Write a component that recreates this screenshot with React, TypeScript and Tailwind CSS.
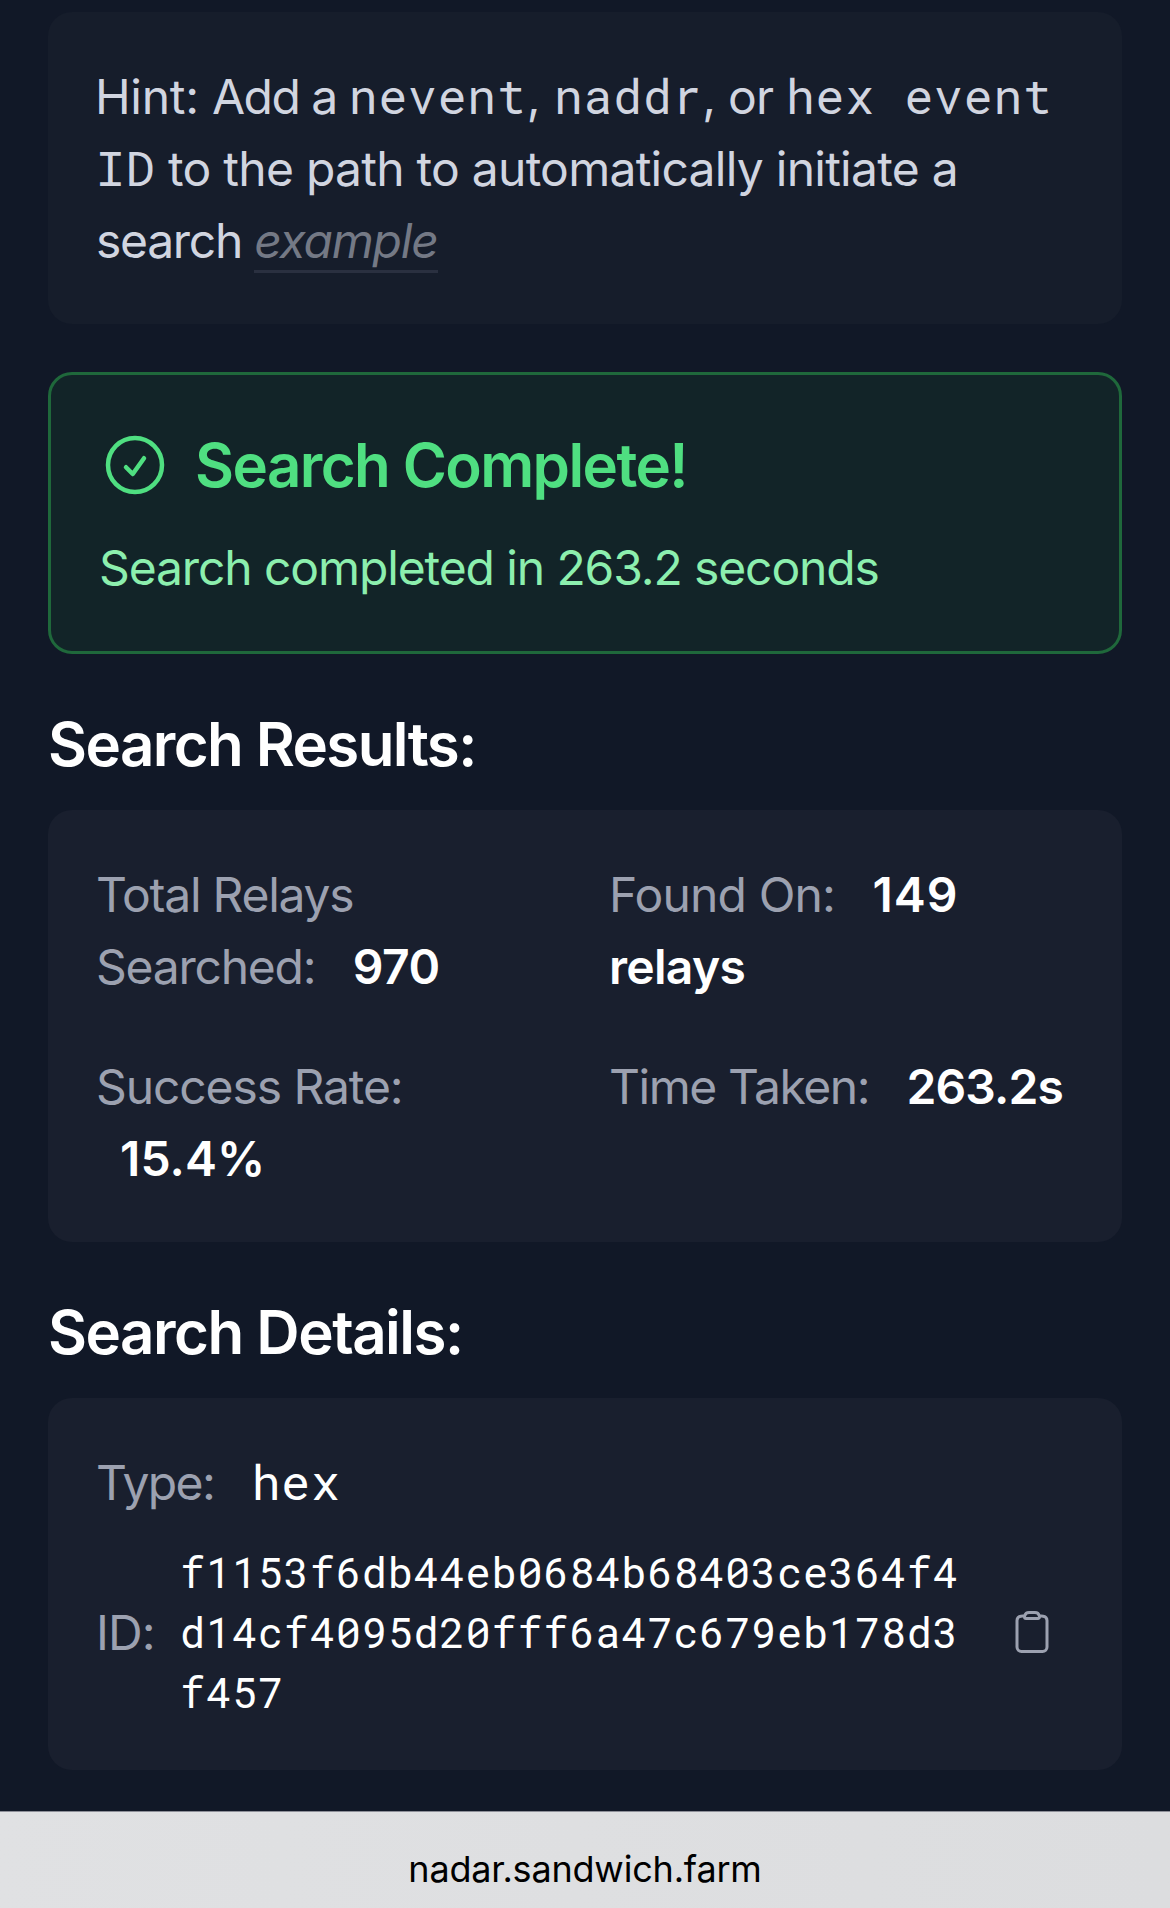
import React from "react";

interface CodeProps {
  className?: string;
  children: React.ReactNode;
}

const Code: React.FC<CodeProps> = ({ className = "", children }) => (
  <code className={`font-['Roboto_Mono','Liberation_Mono',monospace] tracking-[0.84px] leading-none ${className}`}>
    {children}
  </code>
);

const CheckCircleIcon = () => (
  <svg className="size-[72px] shrink-0" viewBox="0 0 24 24" fill="none" stroke="currentColor" strokeWidth="1.5">
    <path
      strokeLinecap="round"
      strokeLinejoin="round"
      d="M9 12.75L11.25 15 15 9.75M21 12a9 9 0 11-18 0 9 9 0 0118 0z"
    />
  </svg>
);

const ClipboardIcon = () => (
  <svg className="size-12" viewBox="0 0 24 24" fill="none" stroke="currentColor" strokeWidth="1.5">
    <path
      strokeLinecap="round"
      strokeLinejoin="round"
      d="M15.666 3.888A2.25 2.25 0 0013.5 2.25h-3c-1.03 0-1.9.693-2.166 1.638m7.332 0c.055.194.084.4.084.612v0a.75.75 0 01-.75.75H9a.75.75 0 01-.75-.75v0c0-.212.03-.418.084-.612m7.332 0c.646.049 1.288.11 1.927.184 1.1.128 1.907 1.077 1.907 2.185V19.5a2.25 2.25 0 01-2.25 2.25H6.75A2.25 2.25 0 014.5 19.5V6.257c0-1.108.806-2.057 1.907-2.185a48.208 48.208 0 011.927-.184"
    />
  </svg>
);

const stats = [
  { label: "Total Relays Searched:", value: "970", labelClass: "tracking-[-1.25px]", valueClass: "tracking-[-0.4px]" },
  { label: "Found On:", value: "149", unit: "relays", labelClass: "tracking-[-0.86px]", valueClass: "tracking-[1px]" },
  { label: "Success Rate:", value: "15.4%", labelClass: "tracking-[-1.1px]", valueClass: "tracking-[0.1px]" },
  { label: "Time Taken:", value: "263.2s", labelClass: "tracking-[-1.45px]", valueClass: "tracking-[-0.9px]" },
];

const App: React.FC = () => {
  return (
    <div className="flex h-[1908px] w-[1170px] flex-col overflow-hidden bg-[#111827] font-['Inter','Liberation_Sans',sans-serif] text-[48px] leading-[72px] text-white">
      <main className="flex flex-1 flex-col px-12 pt-3">
        {/* Hint */}
        <div className="rounded-3xl bg-[#161d2b] px-12 pt-[49px] pb-[47px] text-[#d1d5e0]">
          <p>
            <span className="-ml-px tracking-[-0.3px]">Hint: </span>
            <span className="tracking-[-1.5px]">Add a </span>
            <Code>nevent</Code>, <Code>naddr</Code>
            <span className="tracking-[-0.8px]">, or </span>
            <Code>hex event ID</Code>
            <span className="tracking-[-0.75px]"> to the path to automatically initiate a</span>{" "}
            <span className="tracking-[-1.3px]">search </span>
            <a className="border-b-[3px] border-[#2a3040] tracking-[-1.2px] text-[#747985] italic">example</a>
          </p>
        </div>

        {/* Status */}
        <div className="mt-12 rounded-3xl border-[3px] border-[#1f683b] bg-[#122428] px-12 pt-12 pb-[47px]">
          <div className="mb-[25px] flex items-center gap-6 text-[#4fdf81]">
            <CheckCircleIcon />
            <h3 className="text-[60px] leading-[84px] font-semibold tracking-[-1.6px]">Search Complete!</h3>
          </div>
          <p className="tracking-[-1.11px] text-[#8cefae]">Search completed in 263.2 seconds</p>
        </div>

        {/* Results */}
        <h3 className="mt-12 mb-6 text-[60px] leading-[84px] font-semibold tracking-[-1.6px]">Search Results:</h3>
        <div className="grid grid-cols-2 gap-12 rounded-3xl bg-[#191f2e] px-12 pt-[49px] pb-[47px]">
          {stats.map((stat) => (
            <div key={stat.label}>
              <span className={`text-[#9ca1b0] ${stat.labelClass}`}>{stat.label}</span>{" "}
              <span className={`ml-6 font-semibold ${stat.valueClass}`}>{stat.value}</span>
              {stat.unit && <span className="font-semibold tracking-[-0.7px]"> {stat.unit}</span>}
            </div>
          ))}
        </div>

        {/* Details */}
        <h3 className="mt-12 mb-6 text-[60px] leading-[84px] font-semibold tracking-[-1.5px]">Search Details:</h3>
        <div className="flex flex-col gap-[23px] rounded-3xl bg-[#191f2e] px-12 pt-[49px] pb-12">
          <div>
            <span className="tracking-[-1.6px] text-[#9ca1b0]">Type:</span>{" "}
            <Code className="ml-6">hex</Code>
          </div>
          <div className="flex items-center">
            <span className="w-[84px] shrink-0 pt-0.5 tracking-[-0.9px] text-[#9ca1b0]">ID:</span>
            <code className="w-[780px] shrink-0 font-['Roboto_Mono','Liberation_Mono',monospace] text-[42px] leading-[60px] tracking-[0.75px] break-all">
              f1153f6db44eb0684b68403ce364f4d14cf4095d20fff6a47c679eb178d3f457
            </code>
            <button className="ml-12 text-[#9ca1b0]">
              <ClipboardIcon />
            </button>
          </div>
        </div>
      </main>

      {/* Browser address bar */}
      <footer className="flex h-[97px] items-center justify-center border-t border-[#8d8f98] bg-linear-to-r from-[#e0e1e3] to-[#dcdddf] pt-[18px] text-[36px] leading-[48px] tracking-[-0.19px] text-black">
        nadar.sandwich.farm
      </footer>
    </div>
  );
};

export default App;
